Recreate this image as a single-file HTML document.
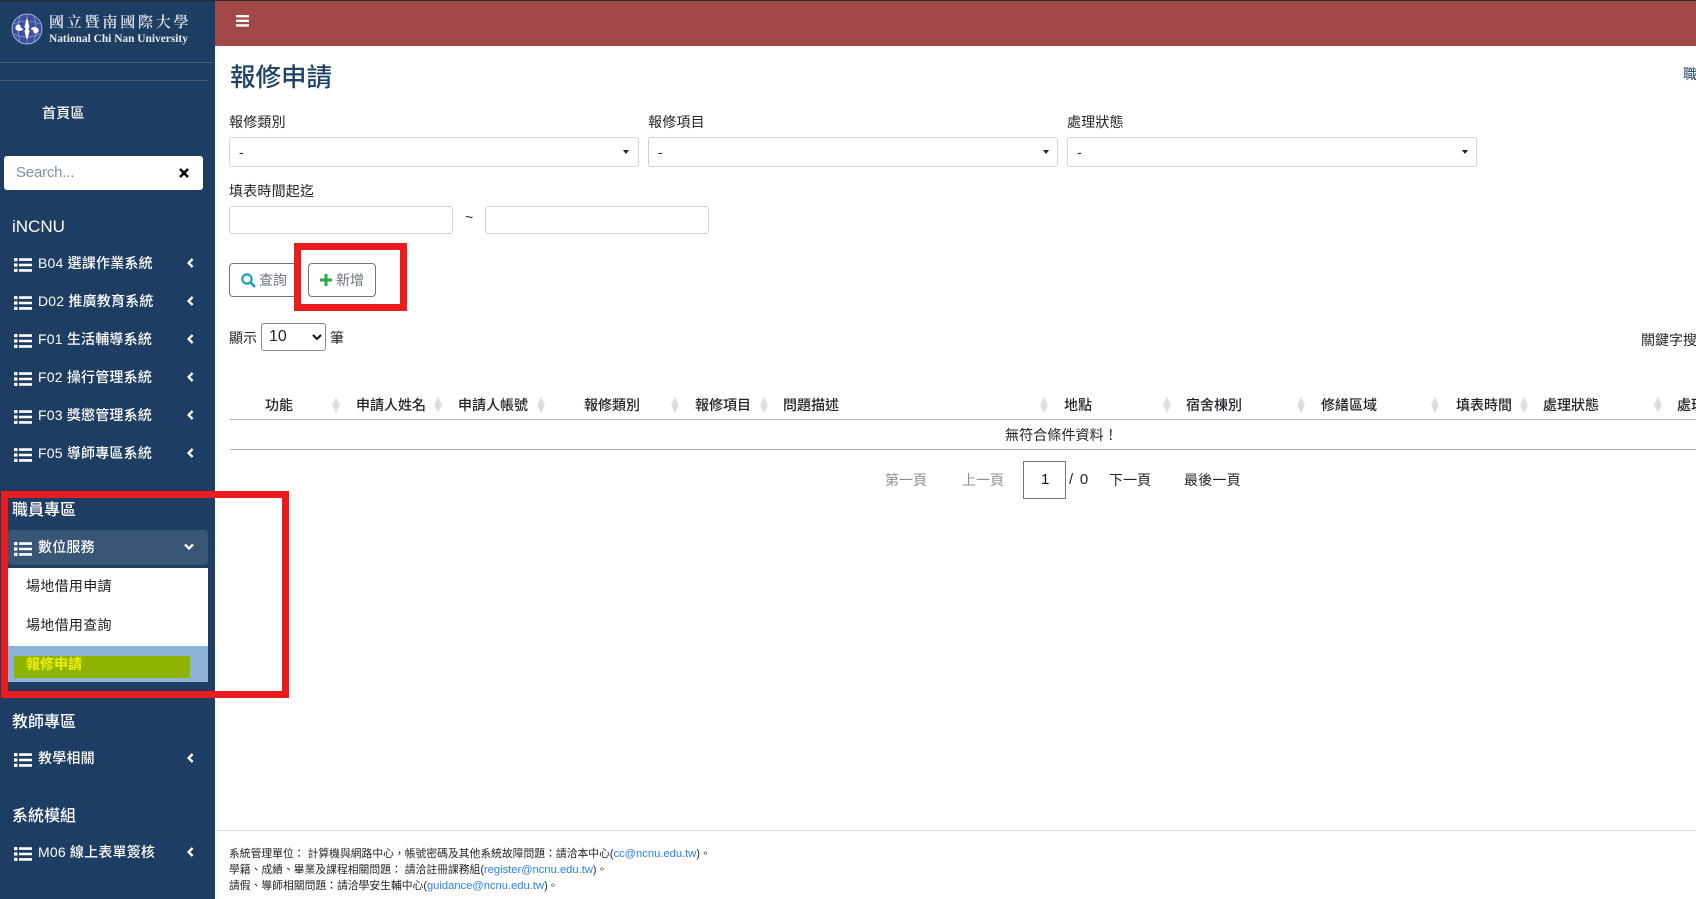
<!DOCTYPE html>
<html lang="zh-Hant">
<head>
<meta charset="utf-8">
<title>報修申請</title>
<style>
html,body{margin:0;padding:0;width:1696px;height:899px;overflow:hidden;background:#fff}
body{position:relative;font-family:"Liberation Sans","Noto Sans CJK TC",sans-serif;font-size:14px;color:#212529}
.t{position:absolute;white-space:nowrap;line-height:20px;height:20px}
.b{position:absolute;box-sizing:border-box}
.side{color:#fff;font-weight:500;letter-spacing:.2px}
.h{color:#fff;font-size:16px;font-weight:500}
.box{position:absolute;box-sizing:border-box;background:#fff;border:1px solid #ced4da;border-radius:3px}
.car{position:absolute;width:0;height:0;border-left:3.5px solid transparent;border-right:3.5px solid transparent;border-top:4px solid #222}
.th{color:#212529;font-weight:500}
.so{position:absolute;width:8px;height:16px;top:397px}
.ft{font-size:10.8px}
.ft a{font-size:11.2px}
svg{position:absolute;overflow:visible}
a{color:#2b7fe8;text-decoration:none}
</style>
</head>
<body>
<svg width="0" height="0" style="position:absolute"><defs>
<symbol id="list" viewBox="0 0 18 14"><g fill="#fff"><rect x="0" y="0" width="3.5" height="3.2" rx=".6"/><rect x="0" y="5.4" width="3.5" height="3.2" rx=".6"/><rect x="0" y="10.8" width="3.5" height="3.2" rx=".6"/><rect x="5" y=".3" width="13" height="2.6" rx=".5"/><rect x="5" y="5.7" width="13" height="2.6" rx=".5"/><rect x="5" y="11.1" width="13" height="2.6" rx=".5"/></g></symbol>
<symbol id="chev" viewBox="0 0 7 10"><path d="M5.6 1 1.6 5l4 4" fill="none" stroke="#fff" stroke-width="2.3"/></symbol>
<symbol id="sort" viewBox="0 0 8 16"><path d="M4 0 8 8 4 16 0 8z" fill="#dedede"/></symbol>
</defs></svg>

<!-- top -->
<div class="b" style="left:0;top:0;width:1696px;height:1px;background:#2b2b2b"></div>
<div class="b" style="left:215px;top:1px;width:1481px;height:45px;background:#a34848"></div>
<svg style="left:236px;top:15px" width="14" height="12"><g fill="#fff"><rect y="0" width="13" height="2.4" rx=".5"/><rect y="4.6" width="13" height="2.4" rx=".5"/><rect y="9.2" width="13" height="2.4" rx=".5"/></g></svg>

<!-- sidebar -->
<div class="b" style="left:0;top:1px;width:215px;height:898px;background:#1d3d63"></div>
<svg style="left:11px;top:13px" width="32" height="32" viewBox="0 0 32 32">
<circle cx="16" cy="16" r="15" fill="#3c4f9e" stroke="#c5cdea" stroke-width=".8"/>
<path d="M3 11q13-6 26 0M3 21q13 6 26 0M16 1v8M16 23v8M9 3q-4 13 0 26M23 3q4 13 0 26" fill="none" stroke="#8e9ad0" stroke-width=".8"/>
<path d="M16 6 18 14 16 17 14 14zM16 26 18 18 16 15 14 18zM12 16c-3 3-8 1-7-2s5-2 4 0M20 16c3-3 8-1 7 2s-5 2-4 0" fill="#fff" stroke="#fff" stroke-width="1"/>
</svg>
<div class="t" style="left:49px;top:13px;color:#e4e8ee;font:600 15px/20px 'Liberation Serif','Noto Serif CJK SC',serif;letter-spacing:2.8px">國立暨南國際大學</div>
<div class="t" style="left:49px;top:29px;color:#e8ebf0;font:700 11.4px/20px 'Liberation Serif',serif">National Chi Nan University</div>
<div class="b" style="left:0;top:62px;width:215px;height:1px;background:#4b5a6e"></div>
<div class="b" style="left:0;top:80px;width:208px;height:1px;background:#4b5a6e"></div>
<div class="t side" style="left:42px;top:103px">首頁區</div>

<div class="b" style="left:4px;top:156px;width:199px;height:34px;background:#fff;border-radius:3px"></div>
<div class="t" style="left:16px;top:163px;color:#87909a;font-size:15px;font-weight:400;letter-spacing:-.2px">Search...</div>
<svg style="left:179px;top:168px" width="10" height="10"><path d="M1 1 9 9M9 1 1 9" stroke="#000" stroke-width="2.6"/></svg>

<div class="t h" style="left:12px;top:217px;font-size:17px;font-weight:400">iNCNU</div>

<svg style="left:14px;top:258px" width="18" height="14"><use href="#list"/></svg><div class="t side" style="left:38px;top:253px">B04 選課作業系統</div><svg style="left:187px;top:258px" width="7" height="10"><use href="#chev"/></svg>
<svg style="left:14px;top:296px" width="18" height="14"><use href="#list"/></svg><div class="t side" style="left:38px;top:291px">D02 推廣教育系統</div><svg style="left:187px;top:296px" width="7" height="10"><use href="#chev"/></svg>
<svg style="left:14px;top:334px" width="18" height="14"><use href="#list"/></svg><div class="t side" style="left:38px;top:329px">F01 生活輔導系統</div><svg style="left:187px;top:334px" width="7" height="10"><use href="#chev"/></svg>
<svg style="left:14px;top:372px" width="18" height="14"><use href="#list"/></svg><div class="t side" style="left:38px;top:367px">F02 操行管理系統</div><svg style="left:187px;top:372px" width="7" height="10"><use href="#chev"/></svg>
<svg style="left:14px;top:410px" width="18" height="14"><use href="#list"/></svg><div class="t side" style="left:38px;top:405px">F03 獎懲管理系統</div><svg style="left:187px;top:410px" width="7" height="10"><use href="#chev"/></svg>
<svg style="left:14px;top:448px" width="18" height="14"><use href="#list"/></svg><div class="t side" style="left:38px;top:443px">F05 導師專區系統</div><svg style="left:187px;top:448px" width="7" height="10"><use href="#chev"/></svg>

<div class="t h" style="left:12px;top:501px">職員專區</div>
<div class="b" style="left:8px;top:530px;width:200px;height:35px;background:#385575;border-radius:4px"></div>
<svg style="left:14px;top:542px" width="18" height="14"><use href="#list"/></svg><div class="t side" style="left:38px;top:537px">數位服務</div>
<svg style="left:184px;top:543px" width="10" height="8"><path d="M1 1.5 5 5.5 9 1.5" fill="none" stroke="#fff" stroke-width="2.3"/></svg>
<div class="b" style="left:8px;top:568px;width:200px;height:78px;background:#fff"></div>
<div class="t" style="left:26px;top:576px;color:#222;letter-spacing:.3px">場地借用申請</div>
<div class="t" style="left:26px;top:615px;color:#222;letter-spacing:.3px">場地借用查詢</div>
<div class="b" style="left:8px;top:646px;width:200px;height:36px;background:#8cb3d6"></div>
<div class="b" style="left:14px;top:656px;width:176px;height:22px;background:#8fb400"></div>
<div class="t" style="left:26px;top:654px;color:#eef000;font-weight:700">報修申請</div>

<div class="t h" style="left:12px;top:713px">教師專區</div>
<svg style="left:14px;top:753px" width="18" height="14"><use href="#list"/></svg><div class="t side" style="left:38px;top:748px">教學相關</div><svg style="left:187px;top:753px" width="7" height="10"><use href="#chev"/></svg>
<div class="t h" style="left:12px;top:807px">系統模組</div>
<svg style="left:14px;top:847px" width="18" height="14"><use href="#list"/></svg><div class="t side" style="left:38px;top:842px">M06 線上表單簽核</div><svg style="left:187px;top:847px" width="7" height="10"><use href="#chev"/></svg>

<!-- red box left -->
<div class="b" style="left:1px;top:491px;width:288px;height:207px;border:7px solid #e91c20"></div>

<!-- content -->
<div class="t" style="left:230px;top:63px;height:30px;line-height:30px;font-size:25.5px;font-weight:500;color:#1f4468">報修申請</div>
<div class="t" style="left:1683px;top:64px;color:#1f4468">職</div>

<div class="t" style="left:229px;top:112px;letter-spacing:.2px">報修類別</div>
<div class="t" style="left:648px;top:112px;letter-spacing:.2px">報修項目</div>
<div class="t" style="left:1067px;top:112px;letter-spacing:.2px">處理狀態</div>
<div class="box" style="left:229px;top:137px;width:410px;height:30px"></div><div class="t" style="left:239px;top:142px">-</div><div class="car" style="left:623px;top:150px"></div>
<div class="box" style="left:648px;top:137px;width:410px;height:30px"></div><div class="t" style="left:658px;top:142px">-</div><div class="car" style="left:1043px;top:150px"></div>
<div class="box" style="left:1067px;top:137px;width:410px;height:30px"></div><div class="t" style="left:1077px;top:142px">-</div><div class="car" style="left:1462px;top:150px"></div>

<div class="t" style="left:229px;top:181px;letter-spacing:.2px">填表時間起迄</div>
<div class="box" style="left:229px;top:206px;width:224px;height:28px"></div>
<div class="t" style="left:465px;top:207px">~</div>
<div class="box" style="left:485px;top:206px;width:224px;height:28px"></div>

<!-- buttons -->
<div class="b" style="left:229px;top:263px;width:80px;height:34px;border:1px solid #6c757d;border-radius:4px"></div>
<svg style="left:241px;top:273px" width="15" height="15" viewBox="0 0 15 15"><circle cx="6" cy="6" r="4.6" fill="none" stroke="#17a2b8" stroke-width="2.2"/><path d="M9.5 9.5 14 14" stroke="#17a2b8" stroke-width="2.6"/></svg>
<div class="t" style="left:259px;top:270px;color:#6c757d">查詢</div>
<div class="b" style="left:294px;top:243px;width:113px;height:68px;border:7px solid #e91c20;background:#fff"></div>
<div class="b" style="left:308px;top:263px;width:68px;height:34px;border:1px solid #6c757d;border-radius:4px"></div>
<svg style="left:320px;top:274px" width="13" height="13"><path d="M6 0v12M0 6h12" stroke="#28a745" stroke-width="3"/></svg>
<div class="t" style="left:336px;top:270px;color:#6c757d">新增</div>

<!-- length -->
<div class="t" style="left:229px;top:328px">顯示</div>
<div class="b" style="left:261px;top:323px;width:65px;height:28px;border:1px solid #8a8a8a;border-radius:3px"></div>
<div class="t" style="left:269px;top:327px;font-size:16px">10</div>
<svg style="left:312px;top:334px" width="10" height="7"><path d="M1 1 5 5 9 1" fill="none" stroke="#111" stroke-width="2"/></svg>
<div class="t" style="left:330px;top:328px">筆</div>
<div class="t" style="left:1641px;top:330px">關鍵字搜</div>

<!-- table header -->
<div class="t th" style="left:265px;top:395px">功能</div><svg class="so" style="left:332px"><use href="#sort" width="8" height="16"/></svg>
<div class="t th" style="left:356px;top:395px">申請人姓名</div><svg class="so" style="left:434px"><use href="#sort" width="8" height="16"/></svg>
<div class="t th" style="left:458px;top:395px">申請人帳號</div><svg class="so" style="left:537px"><use href="#sort" width="8" height="16"/></svg>
<div class="t th" style="left:584px;top:395px">報修類別</div><svg class="so" style="left:671px"><use href="#sort" width="8" height="16"/></svg>
<div class="t th" style="left:695px;top:395px">報修項目</div><svg class="so" style="left:760px"><use href="#sort" width="8" height="16"/></svg>
<div class="t th" style="left:783px;top:395px">問題描述</div><svg class="so" style="left:1040px"><use href="#sort" width="8" height="16"/></svg>
<div class="t th" style="left:1064px;top:395px">地點</div><svg class="so" style="left:1163px"><use href="#sort" width="8" height="16"/></svg>
<div class="t th" style="left:1186px;top:395px">宿舍棟別</div><svg class="so" style="left:1297px"><use href="#sort" width="8" height="16"/></svg>
<div class="t th" style="left:1321px;top:395px">修繕區域</div><svg class="so" style="left:1431px"><use href="#sort" width="8" height="16"/></svg>
<div class="t th" style="left:1456px;top:395px">填表時間</div><svg class="so" style="left:1520px"><use href="#sort" width="8" height="16"/></svg>
<div class="t th" style="left:1543px;top:395px">處理狀態</div><svg class="so" style="left:1654px"><use href="#sort" width="8" height="16"/></svg>
<div class="t th" style="left:1677px;top:395px">處理</div>
<div class="b" style="left:230px;top:419px;width:1466px;height:1px;background:#b4b4b4"></div>
<div class="t" style="left:1005px;top:425px;letter-spacing:.1px">無符合條件資料！</div>
<div class="b" style="left:230px;top:449px;width:1466px;height:1px;background:#b4b4b4"></div>

<!-- pagination -->
<div class="t" style="left:885px;top:470px;color:#8f8f8f">第一頁</div>
<div class="t" style="left:962px;top:470px;color:#8f8f8f">上一頁</div>
<div class="b" style="left:1023px;top:461px;width:43px;height:38px;border:1px solid #767676"></div>
<div class="t" style="left:1041px;top:470px;font-size:15px;color:#111">1</div>
<div class="t" style="left:1069px;top:470px;font-size:15px;letter-spacing:1.3px">/ 0</div>
<div class="t" style="left:1109px;top:470px">下一頁</div>
<div class="t" style="left:1184px;top:470px;letter-spacing:.2px">最後一頁</div>

<!-- footer -->
<div class="b" style="left:215px;top:830px;width:1481px;height:1px;background:#dee2e6"></div>
<div class="t ft" style="left:229px;top:844px">系統管理單位： 計算機與網路中心，帳號密碼及其他系統故障問題：請洽本中心(<a href="#">cc@ncnu.edu.tw</a>)。</div>
<div class="t ft" style="left:229px;top:860px">學籍、成績、畢業及課程相關問題： 請洽註冊課務組(<a href="#">register@ncnu.edu.tw</a>)。</div>
<div class="t ft" style="left:229px;top:876px">請假、導師相關問題：請洽學安生輔中心(<a href="#">guidance@ncnu.edu.tw</a>)。</div>
</body>
</html>
